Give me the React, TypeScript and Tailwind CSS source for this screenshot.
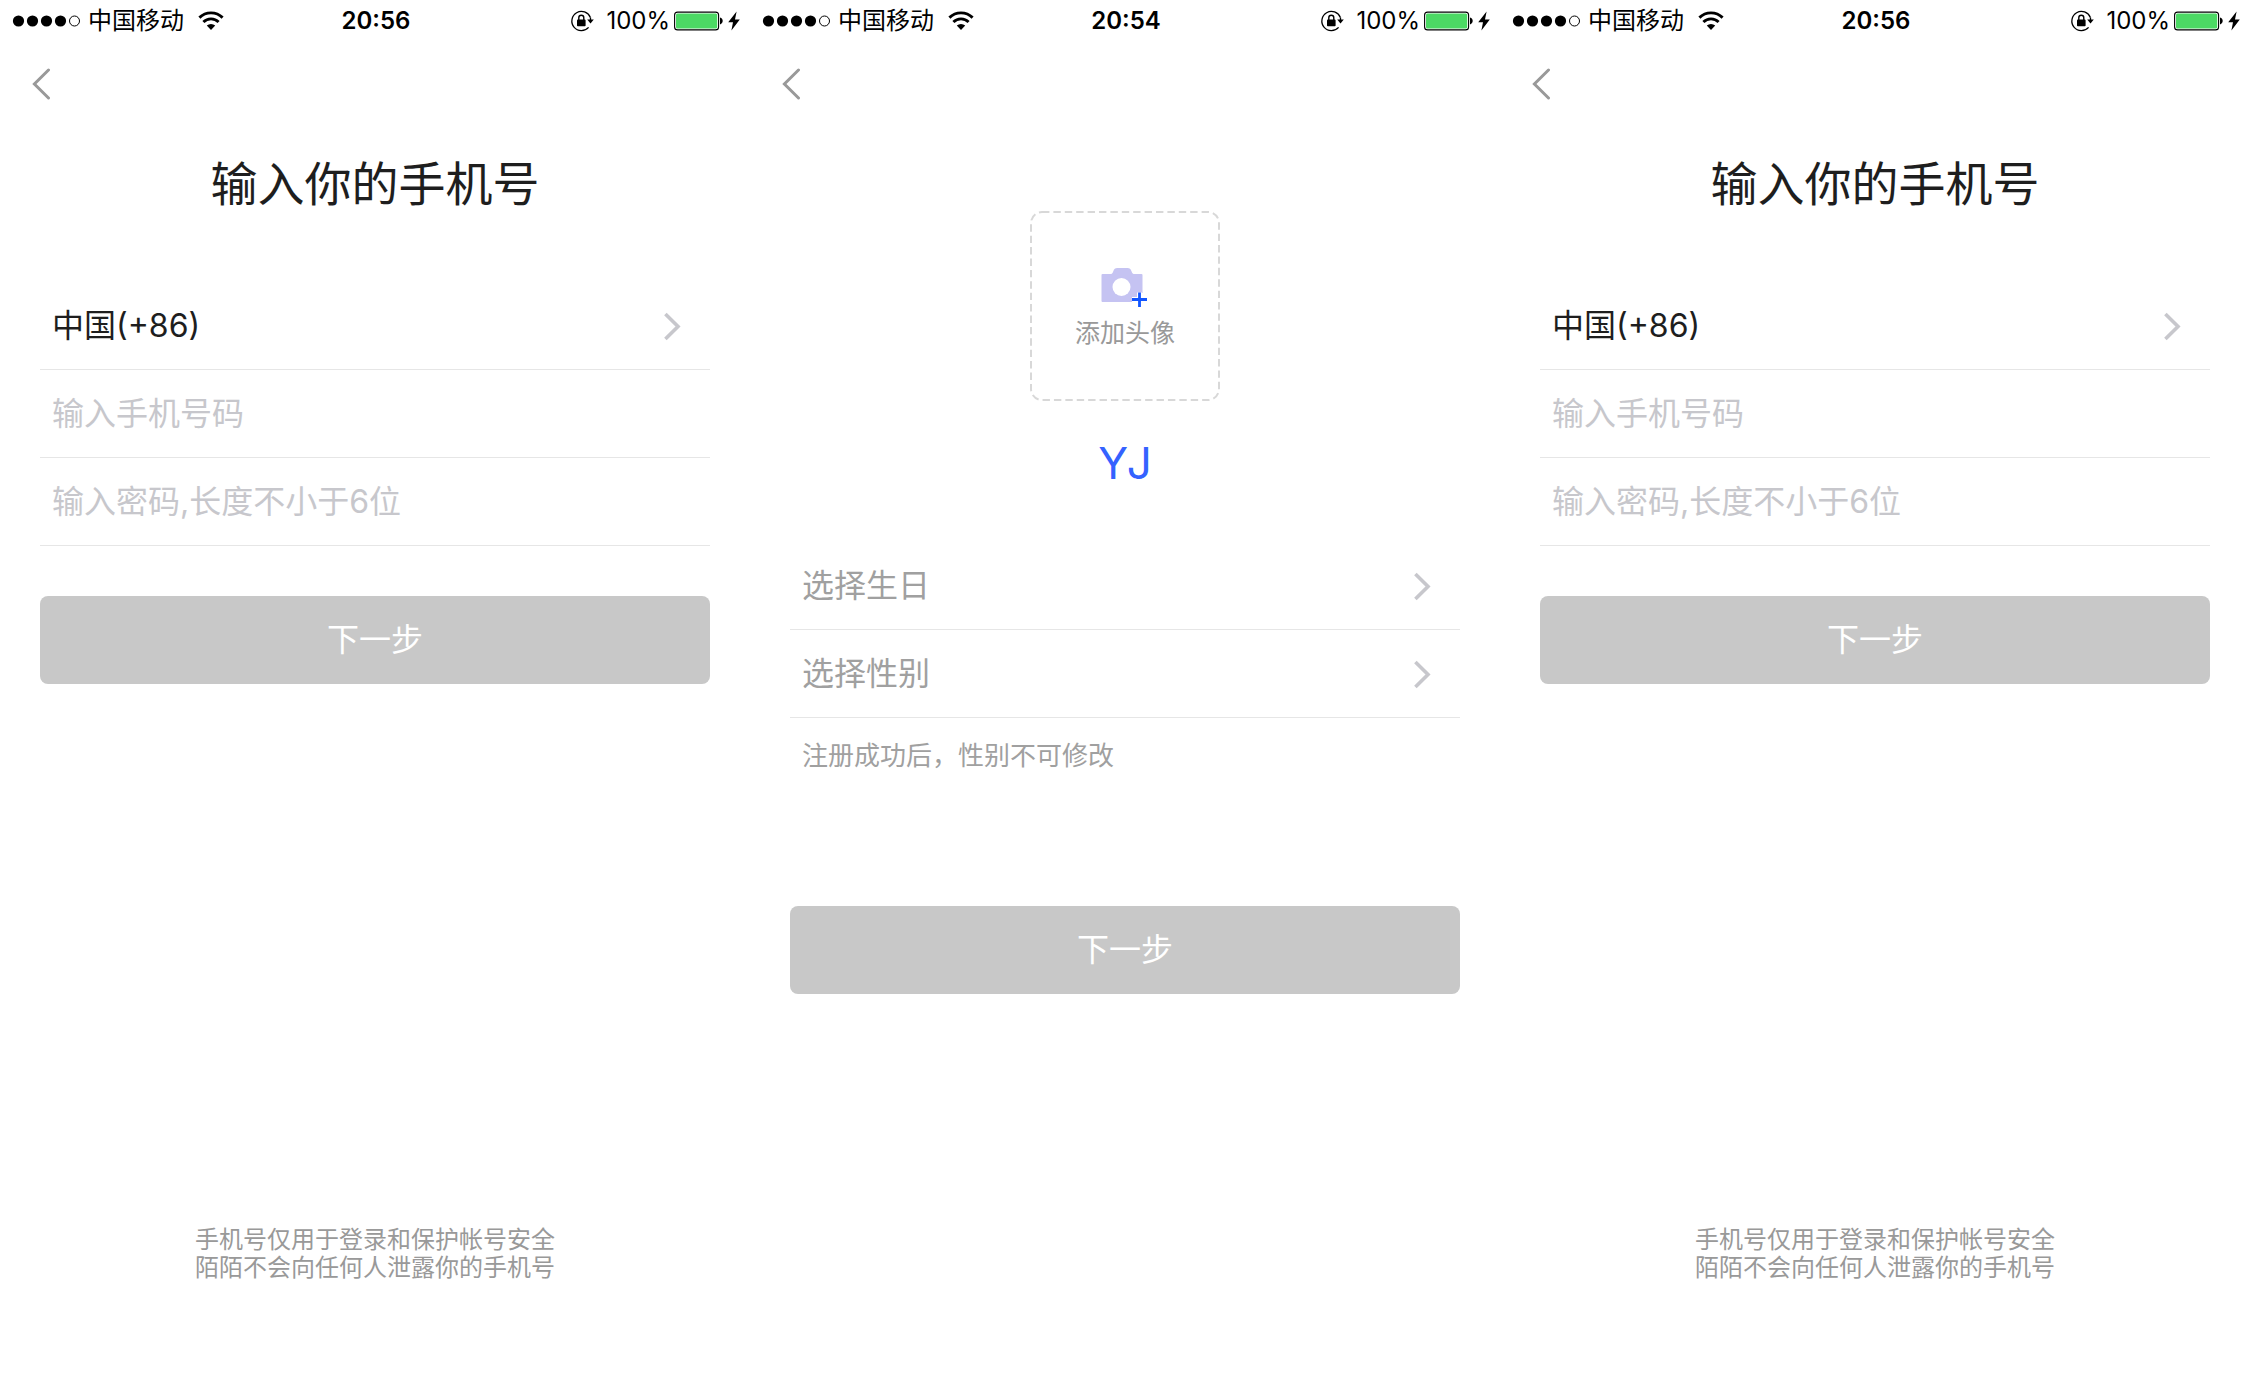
import React from 'react';

interface StatusBarProps {
  time: string;
}

interface SelectRowProps {
  label: string;
  className: string;
}

interface TextRowProps {
  type: string;
  placeholder: string;
}

const StatusBar: React.FC<StatusBarProps> = ({ time }) => {
  return (
    <div className="grid h-[42px] grid-cols-[1fr_auto_1fr] items-center pl-3 pr-2.5 text-2xl text-black">
      <div className="flex items-center">
        <svg className="h-4 w-[70px]" viewBox="0 0 70 16" aria-hidden="true">
          <circle cx="6.5" cy="8" r="5.6" />
          <circle cx="20.5" cy="8" r="5.6" />
          <circle cx="34.5" cy="8" r="5.6" />
          <circle cx="48.5" cy="8" r="5.6" />
          <circle cx="62.5" cy="8" r="5" fill="none" stroke="black" />
        </svg>
        <span className="ml-1.5">中国移动</span>
        <svg className="ml-3.5 h-5 w-[26px]" viewBox="0 0 26 20" fill="none" stroke="black" strokeWidth="2.9" aria-hidden="true">
          <path d="M1.4 6.6a16.6 16.6 0 0 1 23.2 0" />
          <path d="M5.4 11a10.8 10.8 0 0 1 15.2 0" />
          <path d="M8.8 14.6a6 6 0 0 1 8.4 0L13 19z" fill="black" stroke="none" />
        </svg>
      </div>
      <span className="font-semibold">{time}</span>
      <div className="flex items-center justify-end">
        <svg className="h-6 w-6" viewBox="0 0 24 24" aria-hidden="true">
          <path d="M20.4 8.5A9.6 9.6 0 1 0 18.6 18.4" fill="none" stroke="black" strokeWidth="1.3" />
          <path d="M17.2 10.6h6.6l-3.3 4z" />
          <path d="M20.5 8.5v3" stroke="black" strokeWidth="1.3" />
          <rect x="7" y="10.6" width="8.6" height="6.6" rx="0.8" />
          <path d="M8.8 11V8.8a2.5 2.5 0 0 1 5 0V11" fill="none" stroke="black" strokeWidth="1.4" />
        </svg>
        <span className="ml-3">100%</span>
        <svg className="ml-1 h-5 w-[50px]" viewBox="0 0 50 20" aria-hidden="true">
          <rect x="0.6" y="1.1" width="44" height="17.8" rx="3" fill="white" stroke="black" strokeWidth="1.1" />
          <rect x="2" y="2.5" width="41.2" height="15" rx="1.6" fill="#4cd964" />
          <path d="M46 6.6c3.6.6 3.6 6.2 0 6.8z" />
        </svg>
        <svg className="ml-1 h-5 w-3" viewBox="0 0 12 20" aria-hidden="true">
          <path d="M8.6 0.5 0.2 11.2H5L3.4 19.5 11.8 8.4H7z" />
        </svg>
      </div>
    </div>
  );
};

const BackButton: React.FC = () => {
  return (
    <button type="button" aria-label="返回" className="block h-[84px] w-20 cursor-pointer pl-8">
      <svg className="h-8 w-5" viewBox="0 0 20 32" fill="none" stroke="#999999" strokeWidth="3" strokeLinecap="round">
        <path d="M16.5 2 2.4 16 16.5 30" />
      </svg>
    </button>
  );
};

const SelectRow: React.FC<SelectRowProps> = ({ label, className }) => {
  return (
    <button type="button" className={`flex h-[88px] w-full cursor-pointer items-center justify-between border-b border-[#e6e6e6] pl-3 pr-7 text-[32px] ${className}`}>
      <span>{label}</span>
      <svg className="h-8 w-5" viewBox="0 0 20 32" fill="none" stroke="#c7c7cc" strokeWidth="3.6" aria-hidden="true">
        <path d="M3.4 4 16 16.5 3.4 29" />
      </svg>
    </button>
  );
};

const TextRow: React.FC<TextRowProps> = ({ type, placeholder }) => {
  return (
    <div className="h-[88px] border-b border-[#e6e6e6]">
      <input
        type={type}
        aria-label={placeholder}
        placeholder={placeholder}
        className="h-full w-full px-3 text-[32px] text-[#1e1e1e] outline-none placeholder:text-[#c7c7cc]"
      />
    </div>
  );
};

const NextButton: React.FC = () => {
  return (
    <button type="submit" className="h-[88px] w-full cursor-pointer rounded-lg bg-[#c8c8c8] text-[32px] text-white">
      下一步
    </button>
  );
};

const PhoneScreen: React.FC = () => {
  return (
    <section className="flex min-h-screen min-w-0 flex-1 flex-col">
      <StatusBar time="20:56" />
      <BackButton />
      <h1 className="mt-6 text-center text-[47px] leading-17 text-[#1e1e1e]">输入你的手机号</h1>
      <form className="mt-16 px-10">
        <SelectRow label="中国(+86)" className="text-[#1e1e1e]" />
        <TextRow type="tel" placeholder="输入手机号码" />
        <TextRow type="password" placeholder="输入密码,长度不小于6位" />
        <div className="mt-[50px]">
          <NextButton />
        </div>
      </form>
      <p className="mt-auto pb-[110px] text-center text-2xl leading-7 text-[#999999]">
        手机号仅用于登录和保护帐号安全
        <br />
        陌陌不会向任何人泄露你的手机号
      </p>
    </section>
  );
};

const ProfileScreen: React.FC = () => {
  return (
    <section className="flex min-h-screen min-w-0 flex-1 flex-col">
      <StatusBar time="20:54" />
      <BackButton />
      <button type="button" className="relative mx-auto mt-[85px] flex size-[190px] cursor-pointer flex-col items-center pt-14 text-[#999999]">
        <svg className="absolute inset-0 size-full" viewBox="0 0 190 190" fill="none" aria-hidden="true">
          <rect x="1" y="1" width="188" height="188" rx="11" stroke="#d8d8d8" strokeWidth="2" strokeDasharray="7.4 4" />
        </svg>
        <svg className="h-10 w-12" viewBox="0 0 48 40" aria-hidden="true">
          <path d="M1.5 7h7.5c2 0 2.4-.8 3.2-2.6C13.2 2 14 1 16.4 1h10c2.4 0 3.2 1 4.2 3.4C31.4 6.2 31.8 7 33.8 7H40.500a1 1 0 0 1 1 1V26h-4v5h-6v4h-30a1 1 0 0 1-1-1V8a1 1 0 0 1 1-1z" fill="#c5c3f2" />
          <circle cx="20.5" cy="20" r="9" fill="white" />
          <path d="M38.5 25.5v14.5M31 32.5h15" stroke="white" strokeWidth="5" />
          <path d="M38.5 25.5v14.5M31 32.5h15" stroke="#1155ff" strokeWidth="2.8" />
        </svg>
        <span className="mt-2.5 text-[25px] leading-8">添加头像</span>
      </button>
      <h1 className="mt-7 text-center text-[44px] leading-17 text-[#3462ff]">YJ</h1>
      <form className="mt-[45px] px-10">
        <SelectRow label="选择生日" className="text-[#a0a0a0]" />
        <SelectRow label="选择性别" className="text-[#a0a0a0]" />
        <p className="mt-5 pl-3 text-[26px] leading-9 text-[#a0a0a0]">注册成功后，性别不可修改</p>
        <div className="mt-[132px]">
          <NextButton />
        </div>
      </form>
    </section>
  );
};

const App: React.FC = () => {
  return (
    <main className="flex min-h-screen bg-white font-['Inter','Noto_Sans_CJK_SC',sans-serif]">
      <PhoneScreen />
      <ProfileScreen />
      <PhoneScreen />
    </main>
  );
};

export default App;
